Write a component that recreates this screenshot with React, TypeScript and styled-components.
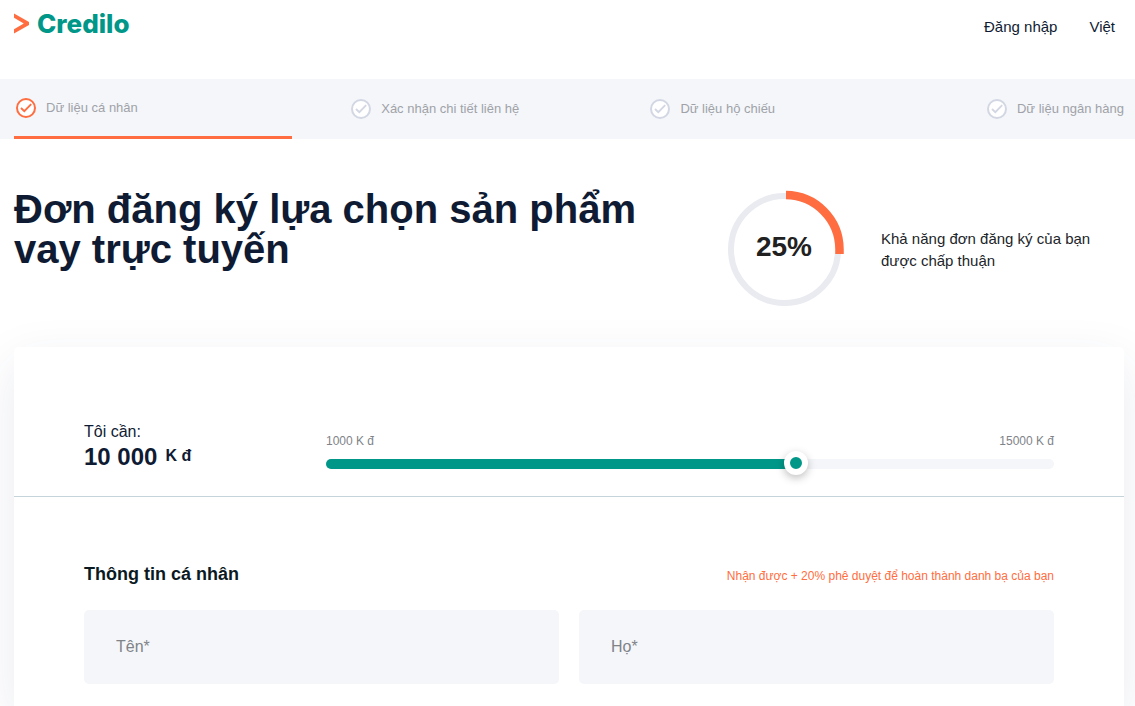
import React, { useState } from "react";
import styled, { createGlobalStyle } from "styled-components";

const orange = "#ff6d40";
const green = "#009788";
const navy = "#0f1b33";
const pale = "#f4f6fa";

const GlobalStyle = createGlobalStyle`
  *, *::before, *::after { box-sizing: border-box; }
  body {
    margin: 0;
    background: #fff;
    color: #212529;
    font-family: "Liberation Sans", Arial, sans-serif;
    overflow-x: hidden;
  }
`;

const Page = styled.div`
  min-height: 100vh;
  display: flex;
  flex-direction: column;
`;

const Header = styled.header`
  height: 79px;
  padding: 9px 20px 0 14px;
  display: flex;
  justify-content: space-between;
  align-items: flex-start;
`;

const Logo = styled.a`
  display: flex;
  align-items: center;
  gap: 7px;
  color: ${green};
  font-family: Inter, sans-serif;
  font-weight: 800;
  font-size: 26px;
  line-height: 30px;
  text-decoration: none;
`;

const Nav = styled.nav`
  display: flex;
  gap: 32px;
  padding-top: 8px;
`;

const NavLink = styled.a`
  color: ${navy};
  font-size: 15px;
  line-height: 20px;
  text-decoration: none;
`;

const StepBar = styled.div`
  background: ${pale};
  padding: 0 11px 0 14px;
`;

const Steps = styled.ol`
  list-style: none;
  margin: 0;
  padding: 0;
  height: 60px;
  display: grid;
  grid-template-columns: repeat(4, 1fr);
`;

const Step = styled.li<{ $active?: boolean; $align?: string }>`
  display: flex;
  align-items: center;
  justify-content: ${(p) => p.$align ?? "center"};
  gap: 10px;
  padding-left: ${(p) => (p.$active ? 2 : 10)}px;
  border-bottom: ${(p) => (p.$active ? `3px solid ${orange}` : "0")};
  color: #a0a2a8;
  font-size: 13px;
  line-height: 20px;
  white-space: nowrap;
`;

const Intro = styled.section`
  display: flex;
  justify-content: space-between;
  height: 208px;
  padding: 50px 11px 0 14px;
`;

const Title = styled.h1`
  margin: 0;
  flex: 0 1 660px;
  color: ${navy};
  font-size: 40px;
  line-height: 40px;
  font-weight: 700;
`;

const Chance = styled.div`
  flex: 0 0 398px;
  display: flex;
  align-items: flex-start;
  gap: 37px;
`;

const Gauge = styled.div`
  display: grid;
  place-items: center;
  flex: none;
  > * { grid-area: 1 / 1; }
`;

const Percent = styled.strong`
  color: #212121;
  font-size: 28px;
  line-height: 32px;
  padding: 0 2px 2px 0;
`;

const ChanceText = styled.p`
  margin: 39px 0 0;
  font-size: 15px;
  line-height: 22px;
`;

const Card = styled.form`
  flex: 1;
  margin: 0 11px 0 14px;
  background: #fff;
  border-radius: 5px 5px 0 0;
  box-shadow: 0 16px 50px rgba(50, 60, 120, 0.1);
`;

const AmountRow = styled.div`
  display: flex;
  height: 150px;
  padding: 74px 70px 0;
  border-bottom: 1px solid #c4d4da;
`;

const Amount = styled.div`
  flex: 0 0 242px;
  color: ${navy};
`;

const AmountLabel = styled.label`
  display: block;
  font-size: 16px;
  line-height: 22px;
`;

const AmountValue = styled.output`
  display: flex;
  gap: 8px;
  font-size: 24px;
  line-height: 28px;
  font-weight: 700;
`;

const Unit = styled.span`
  font-size: 16px;
  line-height: 26px;
`;

const SliderArea = styled.div`
  flex: 1;
  padding-top: 10px;
`;

const Limits = styled.div`
  display: flex;
  justify-content: space-between;
  margin-bottom: 8px;
  color: #808388;
  font-size: 12px;
  line-height: 20px;
`;

const Track = styled.div`
  position: relative;
  height: 10px;
  border-radius: 5px;
  background: ${pale};
`;

const Fill = styled.div`
  height: 10px;
  border-radius: 5px;
  background: ${green};
`;

const Range = styled.input`
  appearance: none;
  position: absolute;
  top: -8px;
  left: -10px;
  width: calc(100% + 24px);
  height: 24px;
  margin: 0;
  background: transparent;
  &::-webkit-slider-thumb {
    appearance: none;
    width: 24px;
    height: 24px;
    border: 6px solid #fff;
    border-radius: 50%;
    background: ${green};
    box-shadow: 0 3px 8px rgba(0, 0, 0, 0.25);
  }
`;

const Personal = styled.section`
  padding: 66px 70px 22px;
`;

const SectionHead = styled.div`
  display: flex;
  justify-content: space-between;
  align-items: center;
  margin-bottom: 25px;
`;

const SectionTitle = styled.h2`
  margin: 0;
  color: #0b1a22;
  font-size: 18px;
  line-height: 22px;
`;

const Bonus = styled.span`
  color: ${orange};
  font-size: 12px;
  line-height: 18px;
  padding-top: 3px;
`;

const Fields = styled.div`
  display: grid;
  grid-template-columns: 1fr 1fr;
  gap: 20px;
`;

const Field = styled.input`
  width: 100%;
  height: 74px;
  padding: 0 32px;
  border: 0;
  border-radius: 5px;
  background: ${pale};
  color: ${navy};
  font: 16px "Liberation Sans", Arial, sans-serif;
  &::placeholder { color: #808388; opacity: 1; }
`;

const CheckIcon = ({ active }: { active?: boolean }) => (
  <svg width="20" height="20" viewBox="0 0 20 20" fill="none" aria-hidden="true"
    stroke={active ? orange : "#d3d7e3"} strokeWidth="2">
    <circle cx="10" cy="10" r="9" fill="#fff" />
    <path d="M5 10 8.3 13.2 15.2 6.2" strokeWidth="1.9" />
  </svg>
);

const steps = [
  { label: "Dữ liệu cá nhân", active: true, align: "flex-start" },
  { label: "Xác nhận chi tiết liên hệ" },
  { label: "Dữ liệu hộ chiếu" },
  { label: "Dữ liệu ngân hàng", align: "flex-end" },
];

const MIN = 1000;
const MAX = 15000;

export default function App() {
  const [amount, setAmount] = useState(10000);
  const ratio = (amount - MIN) / (MAX - MIN);

  return (
    <Page>
      <GlobalStyle />
      <Header>
        <Logo href="#">
          <svg width="16" height="22" viewBox="0 0 16 22" aria-hidden="true">
            <path d="M0 .5 15 9V12L0 20.5V16.2L9.8 10.5 0 4.8Z" fill={orange} />
          </svg>
          Credilo
        </Logo>
        <Nav>
          <NavLink href="#">Đăng nhập</NavLink>
          <NavLink href="#">Việt</NavLink>
        </Nav>
      </Header>

      <StepBar>
        <Steps>
          {steps.map((s) => (
            <Step key={s.label} $active={s.active} $align={s.align}>
              <CheckIcon active={s.active} />
              {s.label}
            </Step>
          ))}
        </Steps>
      </StepBar>

      <Intro>
        <Title>Đơn đăng ký lựa chọn sản phẩm vay trực tuyến</Title>
        <Chance>
          <Gauge>
            <svg width="118" height="118" viewBox="0 0 118 118" fill="none" aria-hidden="true">
              <circle cx="58.5" cy="60.5" r="53.5" stroke="#eaebf1" strokeWidth="6" />
              <path d="M60 6A54 54.5 0 0 1 113.5 60V65" stroke={orange} strokeWidth="8.5" />
            </svg>
            <Percent>25%</Percent>
          </Gauge>
          <ChanceText>
            Khả năng đơn đăng ký của bạn
            <br />
            được chấp thuận
          </ChanceText>
        </Chance>
      </Intro>

      <Card>
        <AmountRow>
          <Amount>
            <AmountLabel htmlFor="amount">Tôi cần:</AmountLabel>
            <AmountValue htmlFor="amount">
              {String(amount).replace(/\B(?=(\d{3})+$)/g, " ")}
              <Unit>K đ</Unit>
            </AmountValue>
          </Amount>
          <SliderArea>
            <Limits>
              <span>1000 K đ</span>
              <span>15000 K đ</span>
            </Limits>
            <Track>
              <Fill style={{ width: `${ratio * 100}%` }} />
              <Range
                id="amount"
                type="range"
                min={MIN}
                max={MAX}
                step={100}
                value={amount}
                onChange={(e) => setAmount(Number(e.target.value))}
              />
            </Track>
          </SliderArea>
        </AmountRow>

        <Personal>
          <SectionHead>
            <SectionTitle>Thông tin cá nhân</SectionTitle>
            <Bonus>Nhận được + 20% phê duyệt để hoàn thành danh bạ của bạn</Bonus>
          </SectionHead>
          <Fields>
            <Field type="text" placeholder="Tên*" aria-label="Tên" />
            <Field type="text" placeholder="Họ*" aria-label="Họ" />
          </Fields>
        </Personal>
      </Card>
    </Page>
  );
}
